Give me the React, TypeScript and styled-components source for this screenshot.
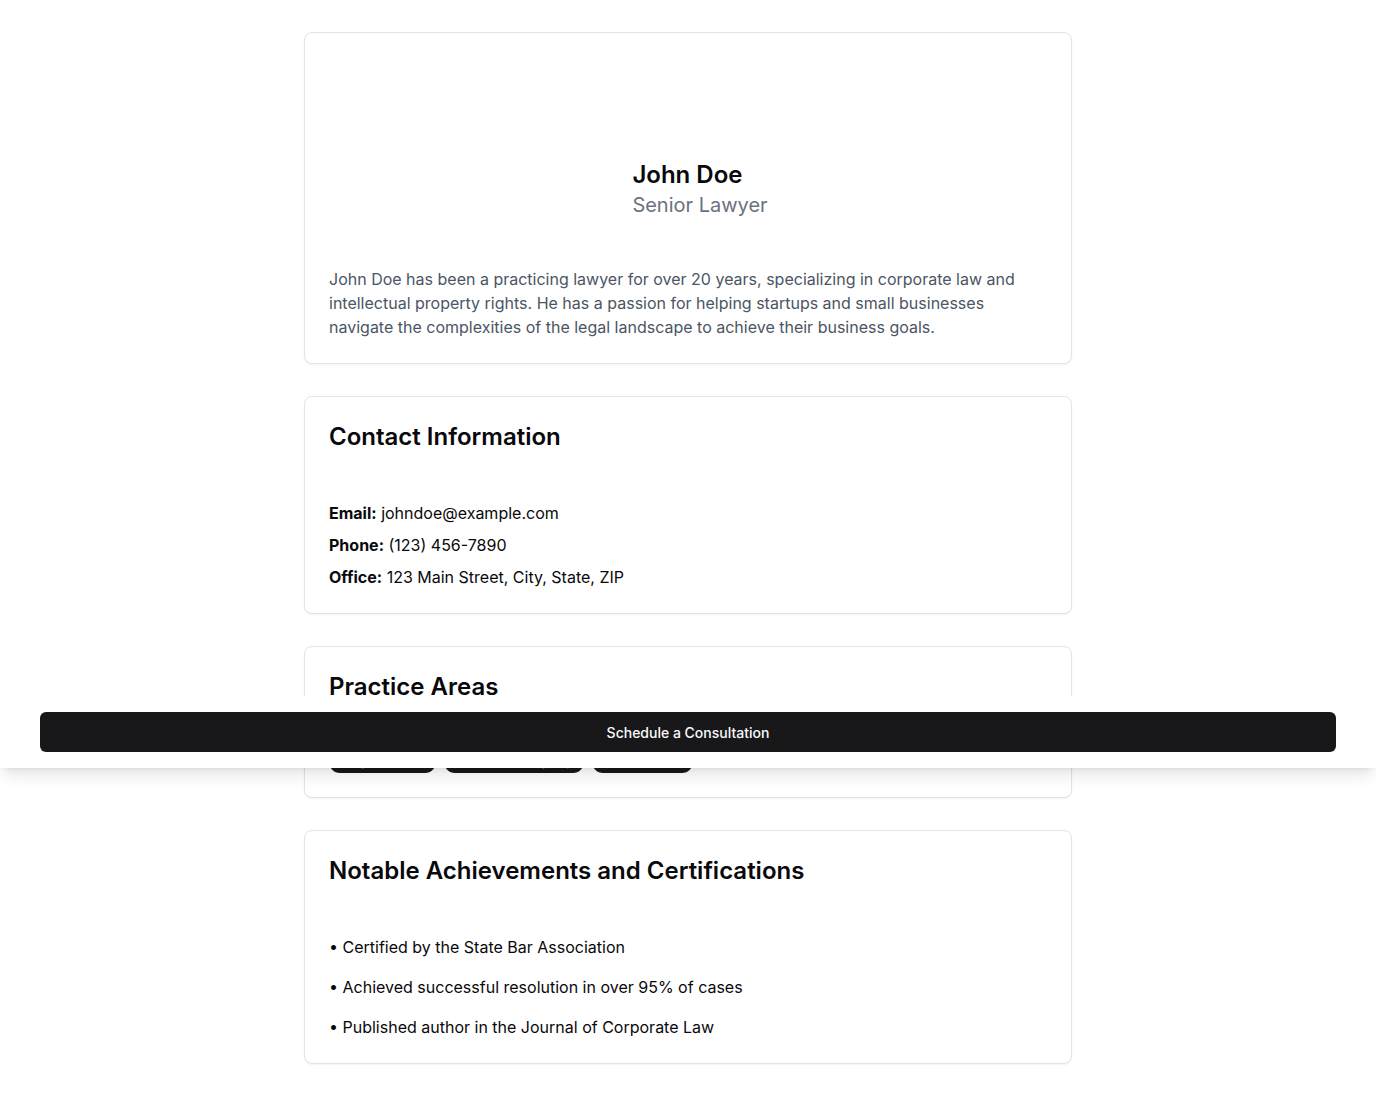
import React from "react";
import styled, { createGlobalStyle } from "styled-components";

const Global = createGlobalStyle`
  html, body { margin: 0; padding: 0; background: #ffffff; }
  body { font-family: Inter, "Noto Sans", sans-serif; color: #09090b; -webkit-font-smoothing: antialiased; }
  * { box-sizing: border-box; }
`;

const Page = styled.div`
  position: relative;
  min-height: 1096px;
  padding: 32px 0 32px;
`;

const Column = styled.main`
  width: 768px;
  margin: 0 auto;
  display: flex;
  flex-direction: column;
  gap: 32px;
`;

const Card = styled.section`
  background: #ffffff;
  border: 1px solid #e4e4e7;
  border-radius: 8px;
  box-shadow: 0 1px 2px rgba(0, 0, 0, 0.05);
  padding: 24px;
`;

const Header = styled.div`
  display: flex;
  justify-content: center;
  align-items: flex-end;
  gap: 24px;
  padding-top: 102px;
  margin-bottom: 48px;
`;

const AvatarSlot = styled.div`
  width: 0;
  height: 0;
`;

const NameBlock = styled.div`
  display: flex;
  flex-direction: column;
`;

const Name = styled.h1`
  margin: 0;
  font-size: 24px;
  line-height: 32px;
  font-weight: 600;
  color: #09090b;
`;

const Role = styled.p`
  margin: 0;
  font-size: 20px;
  line-height: 28px;
  color: #6b7280;
`;

const Bio = styled.p`
  margin: 0;
  font-size: 16px;
  line-height: 24px;
  color: #4b5563;
`;

const Title = styled.h2`
  margin: 0 0 48px;
  font-size: 24px;
  line-height: 32px;
  font-weight: 600;
  color: #09090b;
`;

const List = styled.div<{ $gap: number }>`
  display: flex;
  flex-direction: column;
  gap: ${(p) => p.$gap}px;
`;

const Line = styled.p`
  margin: 0;
  font-size: 16px;
  line-height: 24px;
  color: #09090b;
`;

const Label = styled.strong`
  font-weight: 700;
`;

const Badges = styled.div`
  display: flex;
  flex-wrap: wrap;
  gap: 8px;
`;

const Badge = styled.span`
  display: inline-flex;
  align-items: center;
  padding: 2px 10px;
  border: 1px solid transparent;
  border-radius: 999px;
  background: #18181b;
  color: #fafafa;
  font-size: 12px;
  line-height: 16px;
  font-weight: 600;
`;

const BottomBar = styled.div`
  position: absolute;
  left: 0;
  right: 0;
  top: 696px;
  height: 72px;
  background: #ffffff;
  padding: 16px 40px;
  box-shadow: 0 10px 15px -3px rgba(0, 0, 0, 0.1), 0 4px 6px -4px rgba(0, 0, 0, 0.1);
`;

const Button = styled.button`
  width: 100%;
  height: 40px;
  border: none;
  border-radius: 6px;
  background: #18181b;
  color: #fafafa;
  font-family: Inter, "Noto Sans", sans-serif;
  font-size: 14px;
  font-weight: 500;
  cursor: pointer;
`;

export default function App() {
  return (
    <>
      <Global />
      <Page>
        <Column>
          <Card>
            <Header>
              <AvatarSlot />
              <NameBlock>
                <Name>John Doe</Name>
                <Role>Senior Lawyer</Role>
              </NameBlock>
            </Header>
            <Bio>
              John Doe has been a practicing lawyer for over 20 years, specializing in corporate law and
              intellectual property rights. He has a passion for helping startups and small businesses
              navigate the complexities of the legal landscape to achieve their business goals.
            </Bio>
          </Card>
          <Card>
            <Title>Contact Information</Title>
            <List $gap={8}>
              <Line><Label>Email:</Label> johndoe@example.com</Line>
              <Line><Label>Phone:</Label> (123) 456-7890</Line>
              <Line><Label>Office:</Label> 123 Main Street, City, State, ZIP</Line>
            </List>
          </Card>
          <Card>
            <Title>Practice Areas</Title>
            <Badges>
              <Badge>Corporate Law</Badge>
              <Badge>Intellectual Property</Badge>
              <Badge>Business Law</Badge>
            </Badges>
          </Card>
          <Card>
            <Title>Notable Achievements and Certifications</Title>
            <List $gap={16}>
              <Line>• Certified by the State Bar Association</Line>
              <Line>• Achieved successful resolution in over 95% of cases</Line>
              <Line>• Published author in the Journal of Corporate Law</Line>
            </List>
          </Card>
        </Column>
        <BottomBar>
          <Button>Schedule a Consultation</Button>
        </BottomBar>
      </Page>
    </>
  );
}
